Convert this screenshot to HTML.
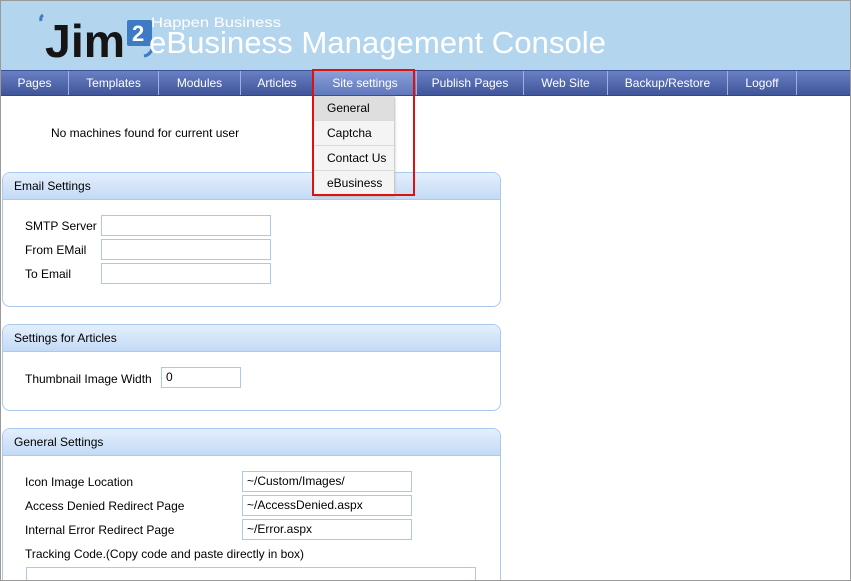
<!DOCTYPE html>
<html style="overflow:hidden;width:851px;height:581px"><head><style>
*{margin:0;padding:0;box-sizing:border-box}
body{width:851px;height:581px;overflow:hidden;background:#fff;font-family:"Liberation Sans",sans-serif;font-size:12px;color:#000;position:relative}
.wrap{position:absolute;left:0;top:0;width:851px;height:580px;overflow:hidden}
.frame{position:absolute;left:0;top:0;width:851px;height:581px;border:1px solid #9a9a9a}
.hdr{position:absolute;left:1px;top:1px;width:849px;height:69px;background:#b4d5ee}
.nav{position:absolute;left:1px;top:70px;width:849px;height:26px;background:linear-gradient(#6a80c4,#3f5499);border-top:1px solid #3a4f93;border-bottom:1px solid #33468a}
.nav div{position:absolute;top:0;height:24px;line-height:24px;text-align:center;color:#fff;border-right:1px solid #9fb0e0;font-size:12px}
.nav .act{background:linear-gradient(#8aa0d8,#6078bd)}
.red{position:absolute;left:312px;top:69px;width:103px;height:127px;border:2px solid #e01010}
.dd{position:absolute;left:314px;top:96px;width:80px}
.dd div{height:25px;line-height:24px;padding-left:13px;background:#f4f4f4;border-bottom:1px solid #ddd;box-shadow:1px 1px 2px #bbb}
.panel{position:absolute;left:2px;width:499px;border:1px solid #a9c9ee;border-radius:8px;background:#fff;overflow:hidden}
.ph{height:27px;line-height:26px;padding-left:11px;background:linear-gradient(#e4effc,#c3daf6);border-bottom:1px solid #a9c9ee}
.lbl{position:absolute;left:25px}
.inp{position:absolute;border:1px solid #a9c9ee;height:21px;line-height:19px;padding-left:4px;background:#fff}
</style></head><body>
<div class="wrap">
<div class="hdr">
<svg width="849" height="69" style="position:absolute;left:0;top:0">
<text x="44" y="56" font-family="Liberation Sans" font-weight="bold" font-size="46" fill="#151515" textLength="80" lengthAdjust="spacingAndGlyphs">Jim</text>
<path d="M42 14 q-3 2 -2 6" stroke="#3d7cc4" stroke-width="3" fill="none"/>
<rect x="126" y="19" width="25" height="26" rx="2" fill="#3d7cc4"/>
<text x="131" y="40" font-family="Liberation Sans" font-weight="bold" font-size="22" fill="#fff">2</text>
<path d="M151 48 q-2 6 -8 7" stroke="#3d7cc4" stroke-width="3" fill="none"/>
<text x="150" y="26" font-family="Liberation Sans" font-size="14" fill="#fff" textLength="130" lengthAdjust="spacingAndGlyphs">Happen Business</text>
<text x="148" y="52" font-family="Liberation Sans" font-size="31" fill="#fff" textLength="457" lengthAdjust="spacingAndGlyphs">eBusiness Management Console</text>
</svg>
</div>
<div class="nav">
<div style="left:0;width:68px">Pages</div>
<div style="left:68px;width:90px">Templates</div>
<div style="left:158px;width:82px">Modules</div>
<div style="left:240px;width:73px">Articles</div>
<div class="act" style="left:313px;width:103px">Site settings</div>
<div style="left:416px;width:107px">Publish Pages</div>
<div style="left:523px;width:84px">Web Site</div>
<div style="left:607px;width:120px">Backup/Restore</div>
<div style="left:727px;width:69px">Logoff</div>
</div>
<div style="position:absolute;left:51px;top:126px">No machines found for current user</div>

<div class="panel" style="top:172px;height:135px"><div class="ph">Email Settings</div></div>
<div class="lbl" style="top:219px">SMTP Server</div><div class="inp" style="left:101px;top:215px;width:170px"></div>
<div class="lbl" style="top:243px">From EMail</div><div class="inp" style="left:101px;top:239px;width:170px"></div>
<div class="lbl" style="top:267px">To Email</div><div class="inp" style="left:101px;top:263px;width:170px"></div>

<div class="panel" style="top:324px;height:87px"><div class="ph">Settings for Articles</div></div>
<div class="lbl" style="top:372px">Thumbnail Image Width</div><div class="inp" style="left:161px;top:367px;width:80px">0</div>

<div class="panel" style="top:428px;height:170px"><div class="ph">General Settings</div></div>
<div class="lbl" style="top:475px">Icon Image Location</div><div class="inp" style="left:242px;top:471px;width:170px">~/Custom/Images/</div>
<div class="lbl" style="top:499px">Access Denied Redirect Page</div><div class="inp" style="left:242px;top:495px;width:170px">~/AccessDenied.aspx</div>
<div class="lbl" style="top:523px">Internal Error Redirect Page</div><div class="inp" style="left:242px;top:519px;width:170px">~/Error.aspx</div>
<div class="lbl" style="top:547px">Tracking Code.(Copy code and paste directly in box)</div>
<div class="inp" style="left:26px;top:567px;width:450px;height:30px"></div>

<div class="dd">
<div style="background:#dedede">General</div><div>Captcha</div><div>Contact Us</div><div>eBusiness</div>
</div>
<div class="red"></div>
</div>
<div class="frame"></div>
</body></html>
